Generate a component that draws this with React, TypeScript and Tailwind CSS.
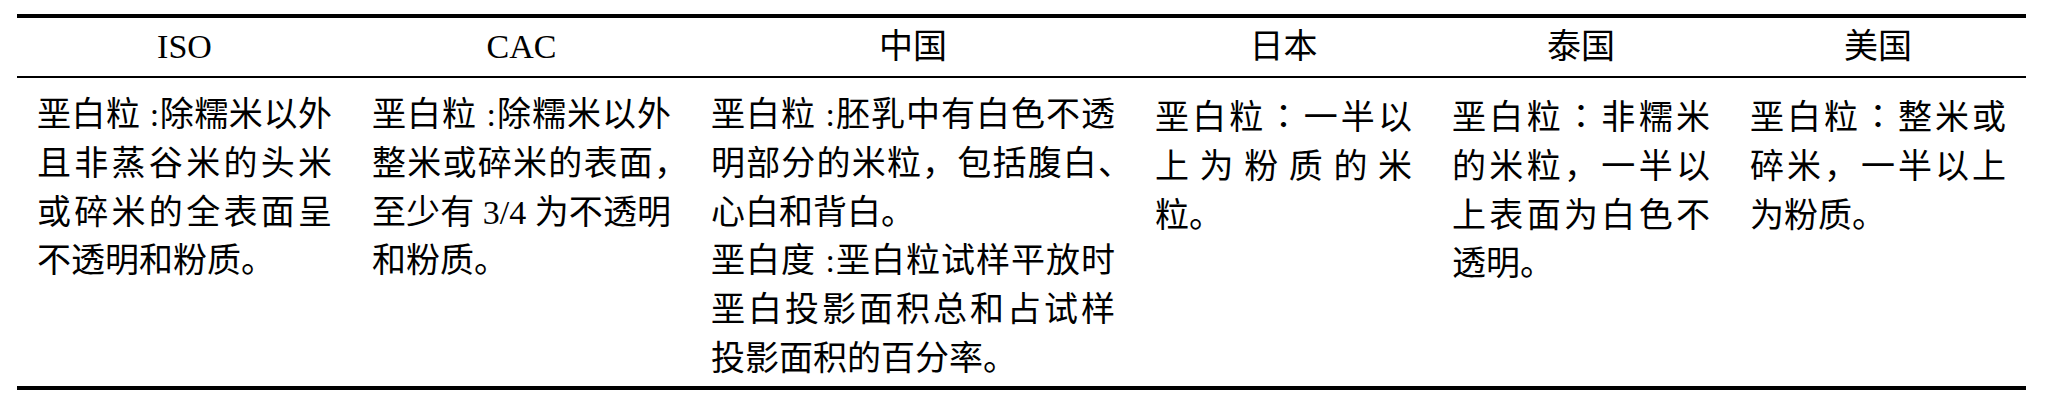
import React from "react";

type Line = { t: React.ReactNode; full: boolean };

const Colon = () => <span className="font-['Noto_Sans_CJK_TC',sans-serif]">：</span>;
const Trim = ({ c }: { c: string }) => (
  <span className="inline-block w-[0.5em] overflow-visible">{c}</span>
);

const cols: { head: string; lines: Line[] }[] = [
  {
    head: "ISO",
    lines: [
      { t: "垩白粒 :除糯米以外", full: true },
      { t: "且非蒸谷米的头米", full: true },
      { t: "或碎米的全表面呈", full: true },
      { t: "不透明和粉质。", full: false },
    ],
  },
  {
    head: "CAC",
    lines: [
      { t: "垩白粒 :除糯米以外", full: true },
      {
        t: (
          <>
            整米或碎米的表面<Trim c="，" />
          </>
        ),
        full: true,
      },
      { t: "至少有 3/4 为不透明", full: true },
      { t: "和粉质。", full: false },
    ],
  },
  {
    head: "中国",
    lines: [
      { t: "垩白粒 :胚乳中有白色不透", full: true },
      {
        t: (
          <>
            明部分的米粒，包括腹白<Trim c="、" />
          </>
        ),
        full: true,
      },
      { t: "心白和背白。", full: false },
      { t: "垩白度 :垩白粒试样平放时", full: true },
      { t: "垩白投影面积总和占试样", full: true },
      { t: "投影面积的百分率。", full: false },
    ],
  },
  {
    head: "日本",
    lines: [
      {
        t: (
          <>
            垩白粒<Colon />一半以
          </>
        ),
        full: true,
      },
      { t: "上为粉质的米", full: true },
      { t: "粒。", full: false },
    ],
  },
  {
    head: "泰国",
    lines: [
      {
        t: (
          <>
            垩白粒<Colon />非糯米
          </>
        ),
        full: true,
      },
      { t: "的米粒，一半以", full: true },
      { t: "上表面为白色不", full: true },
      { t: "透明。", full: false },
    ],
  },
  {
    head: "美国",
    lines: [
      {
        t: (
          <>
            垩白粒<Colon />整米或
          </>
        ),
        full: true,
      },
      { t: "碎米，一半以上", full: true },
      { t: "为粉质。", full: false },
    ],
  },
];

export default function App() {
  return (
    <div className="w-[2045px] h-[416px] bg-white text-black pt-[14px] pl-[17px] font-['Liberation_Serif','Noto_Sans_CJK_SC',serif]">
      <div className="w-[2009px] border-t-4 border-black">
        <div className="grid grid-cols-[335px_339px_444px_297px_298px_296px] h-[60px] border-b-2 border-black text-[34px]">
          {cols.map((c) => (
            <div key={c.head} className="flex items-center justify-center leading-none">
              {c.head}
            </div>
          ))}
        </div>
        <div className="grid grid-cols-[335px_339px_444px_297px_298px_296px] h-[312px] border-b-4 border-black pt-[13px] text-[34px] leading-[48.8px]">
          {cols.map((c) => (
            <div key={c.head} className="px-5">
              {c.lines.map((l, i) => (
                <div
                  key={i}
                  className={l.full ? "text-justify [text-align-last:justify]" : "text-left"}
                >
                  {l.t}
                </div>
              ))}
            </div>
          ))}
        </div>
      </div>
    </div>
  );
}
